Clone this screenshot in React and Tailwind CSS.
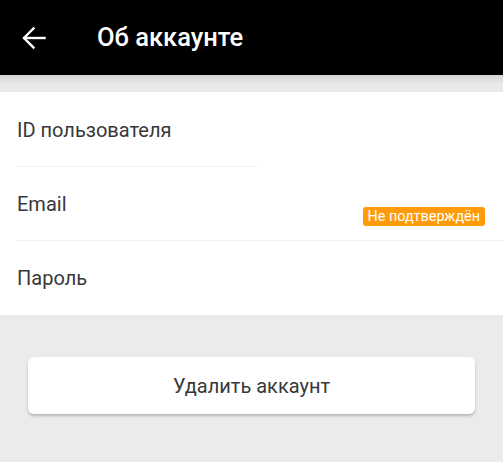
import React from 'react';

const AboutAccount = () => {
  return (
    <div className="w-[503px] h-[462px] bg-[#ebebed] overflow-hidden" style={{ fontFamily: 'Roboto, "Noto Sans", sans-serif' }}>
      {/* header */}
      <div className="h-[75px] bg-black flex items-center">
        <div className="w-[97px] pl-[22px] flex items-center">
          <svg width="24" height="24" viewBox="0 0 24 24" fill="none" stroke="white" strokeWidth="2.4" strokeLinecap="square">
            <path d="M22.5 12H2.5" />
            <path d="M11.5 2.5L2 12l9.5 9.5" />
          </svg>
        </div>
        <span className="text-white text-[25.5px] font-medium leading-none">Об аккаунте</span>
      </div>

      {/* shadow strip */}
      <div className="h-[17px] bg-gradient-to-b from-[#d4d4d6] via-[#e8e8ea] to-[#ebebed]"></div>

      {/* rows */}
      <div className="bg-white h-[223px] pl-[17px]">
        <div className="h-[75px] flex items-center w-[241px] border-b border-[#f0f0f2]">
          <span className="text-[20px] text-[#38383a] mt-[1px]">ID пользователя</span>
        </div>
        <div className="h-[74px] flex items-center justify-between pr-[18px] border-b border-[#f0f0f2] relative">
          <span className="text-[20px] text-[#38383a] mt-[1px]">Email</span>
          <span className="absolute right-[18px] top-[40px] bg-[#ff9b0a] text-white text-[14.4px] leading-[19px] px-[5px] rounded-[3px]">Не подтверждён</span>
        </div>
        <div className="h-[74px] flex items-center">
          <span className="text-[20px] text-[#38383a]">Пароль</span>
        </div>
      </div>

      {/* delete button */}
      <div className="px-[28px] pt-[42px]">
        <button className="w-full h-[57px] bg-white rounded-[6px] shadow-[0_2px_3px_rgba(0,0,0,0.22)] text-[20px] text-[#38383a]">
          Удалить аккаунт
        </button>
      </div>
    </div>
  );
};

export default AboutAccount;
